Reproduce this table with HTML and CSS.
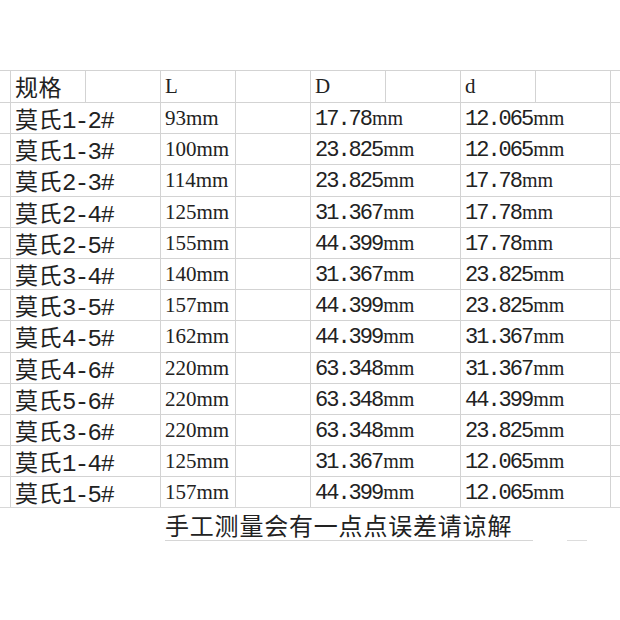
FILE: index.html
```html
<!DOCTYPE html>
<html lang="zh">
<head>
<meta charset="utf-8">
<link rel="stylesheet" href="styles.css">
</head>
<body>
<div class="sheet">
  <div class="row head">
    <div class="gut"></div>
    <div class="cell c1"><span class="zh">规格</span></div>
    <div class="cell c1"></div>
    <div class="cell c1"><span class="lat">L</span></div>
    <div class="cell c1"></div>
    <div class="cell c1"><span class="lat">D</span></div>
    <div class="cell c1"></div>
    <div class="cell c1"><span class="lat">d</span></div>
    <div class="cell c1"></div>
    <div class="cell gut-r"></div>
  </div>
  <div class="row"><div class="gut"></div><div class="cell c2"><span class="zh">莫氏</span><span class="code">1-2#</span></div><div class="cell c1"><span class="lat">93mm</span></div><div class="cell c1"></div><div class="cell c2"><span class="mono">17.78</span><span class="mm">mm</span></div><div class="cell c2"><span class="mono">12.065</span><span class="mm">mm</span></div><div class="cell gut-r"></div></div>
  <div class="row"><div class="gut"></div><div class="cell c2"><span class="zh">莫氏</span><span class="code">1-3#</span></div><div class="cell c1"><span class="lat">100mm</span></div><div class="cell c1"></div><div class="cell c2"><span class="mono">23.825</span><span class="mm">mm</span></div><div class="cell c2"><span class="mono">12.065</span><span class="mm">mm</span></div><div class="cell gut-r"></div></div>
  <div class="row"><div class="gut"></div><div class="cell c2"><span class="zh">莫氏</span><span class="code">2-3#</span></div><div class="cell c1"><span class="lat">114mm</span></div><div class="cell c1"></div><div class="cell c2"><span class="mono">23.825</span><span class="mm">mm</span></div><div class="cell c2"><span class="mono">17.78</span><span class="mm">mm</span></div><div class="cell gut-r"></div></div>
  <div class="row"><div class="gut"></div><div class="cell c2"><span class="zh">莫氏</span><span class="code">2-4#</span></div><div class="cell c1"><span class="lat">125mm</span></div><div class="cell c1"></div><div class="cell c2"><span class="mono">31.367</span><span class="mm">mm</span></div><div class="cell c2"><span class="mono">17.78</span><span class="mm">mm</span></div><div class="cell gut-r"></div></div>
  <div class="row"><div class="gut"></div><div class="cell c2"><span class="zh">莫氏</span><span class="code">2-5#</span></div><div class="cell c1"><span class="lat">155mm</span></div><div class="cell c1"></div><div class="cell c2"><span class="mono">44.399</span><span class="mm">mm</span></div><div class="cell c2"><span class="mono">17.78</span><span class="mm">mm</span></div><div class="cell gut-r"></div></div>
  <div class="row"><div class="gut"></div><div class="cell c2"><span class="zh">莫氏</span><span class="code">3-4#</span></div><div class="cell c1"><span class="lat">140mm</span></div><div class="cell c1"></div><div class="cell c2"><span class="mono">31.367</span><span class="mm">mm</span></div><div class="cell c2"><span class="mono">23.825</span><span class="mm">mm</span></div><div class="cell gut-r"></div></div>
  <div class="row"><div class="gut"></div><div class="cell c2"><span class="zh">莫氏</span><span class="code">3-5#</span></div><div class="cell c1"><span class="lat">157mm</span></div><div class="cell c1"></div><div class="cell c2"><span class="mono">44.399</span><span class="mm">mm</span></div><div class="cell c2"><span class="mono">23.825</span><span class="mm">mm</span></div><div class="cell gut-r"></div></div>
  <div class="row"><div class="gut"></div><div class="cell c2"><span class="zh">莫氏</span><span class="code">4-5#</span></div><div class="cell c1"><span class="lat">162mm</span></div><div class="cell c1"></div><div class="cell c2"><span class="mono">44.399</span><span class="mm">mm</span></div><div class="cell c2"><span class="mono">31.367</span><span class="mm">mm</span></div><div class="cell gut-r"></div></div>
  <div class="row"><div class="gut"></div><div class="cell c2"><span class="zh">莫氏</span><span class="code">4-6#</span></div><div class="cell c1"><span class="lat">220mm</span></div><div class="cell c1"></div><div class="cell c2"><span class="mono">63.348</span><span class="mm">mm</span></div><div class="cell c2"><span class="mono">31.367</span><span class="mm">mm</span></div><div class="cell gut-r"></div></div>
  <div class="row"><div class="gut"></div><div class="cell c2"><span class="zh">莫氏</span><span class="code">5-6#</span></div><div class="cell c1"><span class="lat">220mm</span></div><div class="cell c1"></div><div class="cell c2"><span class="mono">63.348</span><span class="mm">mm</span></div><div class="cell c2"><span class="mono">44.399</span><span class="mm">mm</span></div><div class="cell gut-r"></div></div>
  <div class="row"><div class="gut"></div><div class="cell c2"><span class="zh">莫氏</span><span class="code">3-6#</span></div><div class="cell c1"><span class="lat">220mm</span></div><div class="cell c1"></div><div class="cell c2"><span class="mono">63.348</span><span class="mm">mm</span></div><div class="cell c2"><span class="mono">23.825</span><span class="mm">mm</span></div><div class="cell gut-r"></div></div>
  <div class="row"><div class="gut"></div><div class="cell c2"><span class="zh">莫氏</span><span class="code">1-4#</span></div><div class="cell c1"><span class="lat">125mm</span></div><div class="cell c1"></div><div class="cell c2"><span class="mono">31.367</span><span class="mm">mm</span></div><div class="cell c2"><span class="mono">12.065</span><span class="mm">mm</span></div><div class="cell gut-r"></div></div>
  <div class="row last"><div class="gut"></div><div class="cell c2"><span class="zh">莫氏</span><span class="code">1-5#</span></div><div class="cell c1"><span class="lat">157mm</span></div><div class="cell c1"></div><div class="cell c2"><span class="mono">44.399</span><span class="mm">mm</span></div><div class="cell c2"><span class="mono">12.065</span><span class="mm">mm</span></div><div class="cell gut-r"></div></div>
</div>
<div class="note-wrap">
  <p class="note">手工测量会有一点点误差请谅解</p>
  <span class="dash"></span>
</div>
</body>
</html>
```

FILE: styles.css
```css
html, body {
  margin: 0;
  padding: 0;
  background: #ffffff;
}
body {
  width: 620px;
  height: 620px;
  overflow: hidden;
  color: #222222;
  font-family: "Noto Sans CJK SC", sans-serif;
}
.sheet {
  margin-top: 70px;
  width: 620px;
}
.row {
  display: flex;
  height: 31.2px;
  box-sizing: border-box;
  border-bottom: 1px solid #d3d3d3;
}
.row.head {
  height: 33px;
  border-top: 1px solid #d3d3d3;
}
.row.last {
  border-bottom-color: #d8d8d8;
}
.gut {
  width: 10px;
  flex: none;
}
.cell {
  box-sizing: border-box;
  flex: none;
  border-left: 1px solid #d3d3d3;
  display: block;
  line-height: 29px;
  padding-top: 1px;
  padding-left: 4px;
  white-space: nowrap;
  overflow: visible;
}
.c1 { width: 75px; }
.c2 { width: 150px; }
.gut-r {
  width: 10px;
  padding: 0;
}
.zh {
  font-family: "Noto Sans CJK SC", sans-serif;
  font-size: 23px;
  letter-spacing: 0.5px;
}
.code {
  font-family: "Liberation Mono", monospace;
  font-size: 24px;
  letter-spacing: -1.6px;
}
.mono {
  font-family: "Liberation Mono", monospace;
  font-size: 22px;
  letter-spacing: -2px;
}
.lat {
  font-family: "Liberation Serif", serif;
  font-size: 21px;
}
.mm {
  font-family: "Liberation Serif", serif;
  font-size: 20px;
  margin-left: 1px;
}
.note-wrap {
  display: flex;
  align-items: flex-end;
  padding-left: 165px;
  margin-top: 3px;
}
.note {
  margin: 0;
  width: 368px;
  box-sizing: border-box;
  font-family: "Noto Sans CJK SC", sans-serif;
  font-size: 24px;
  line-height: 28px;
  letter-spacing: 0.8px;
  color: #222222;
  border-bottom: 1px solid #d6d6d6;
  padding-bottom: 1px;
}
.dash {
  display: block;
  width: 20px;
  height: 1px;
  background: #dddddd;
  margin-left: 34px;
}
```
